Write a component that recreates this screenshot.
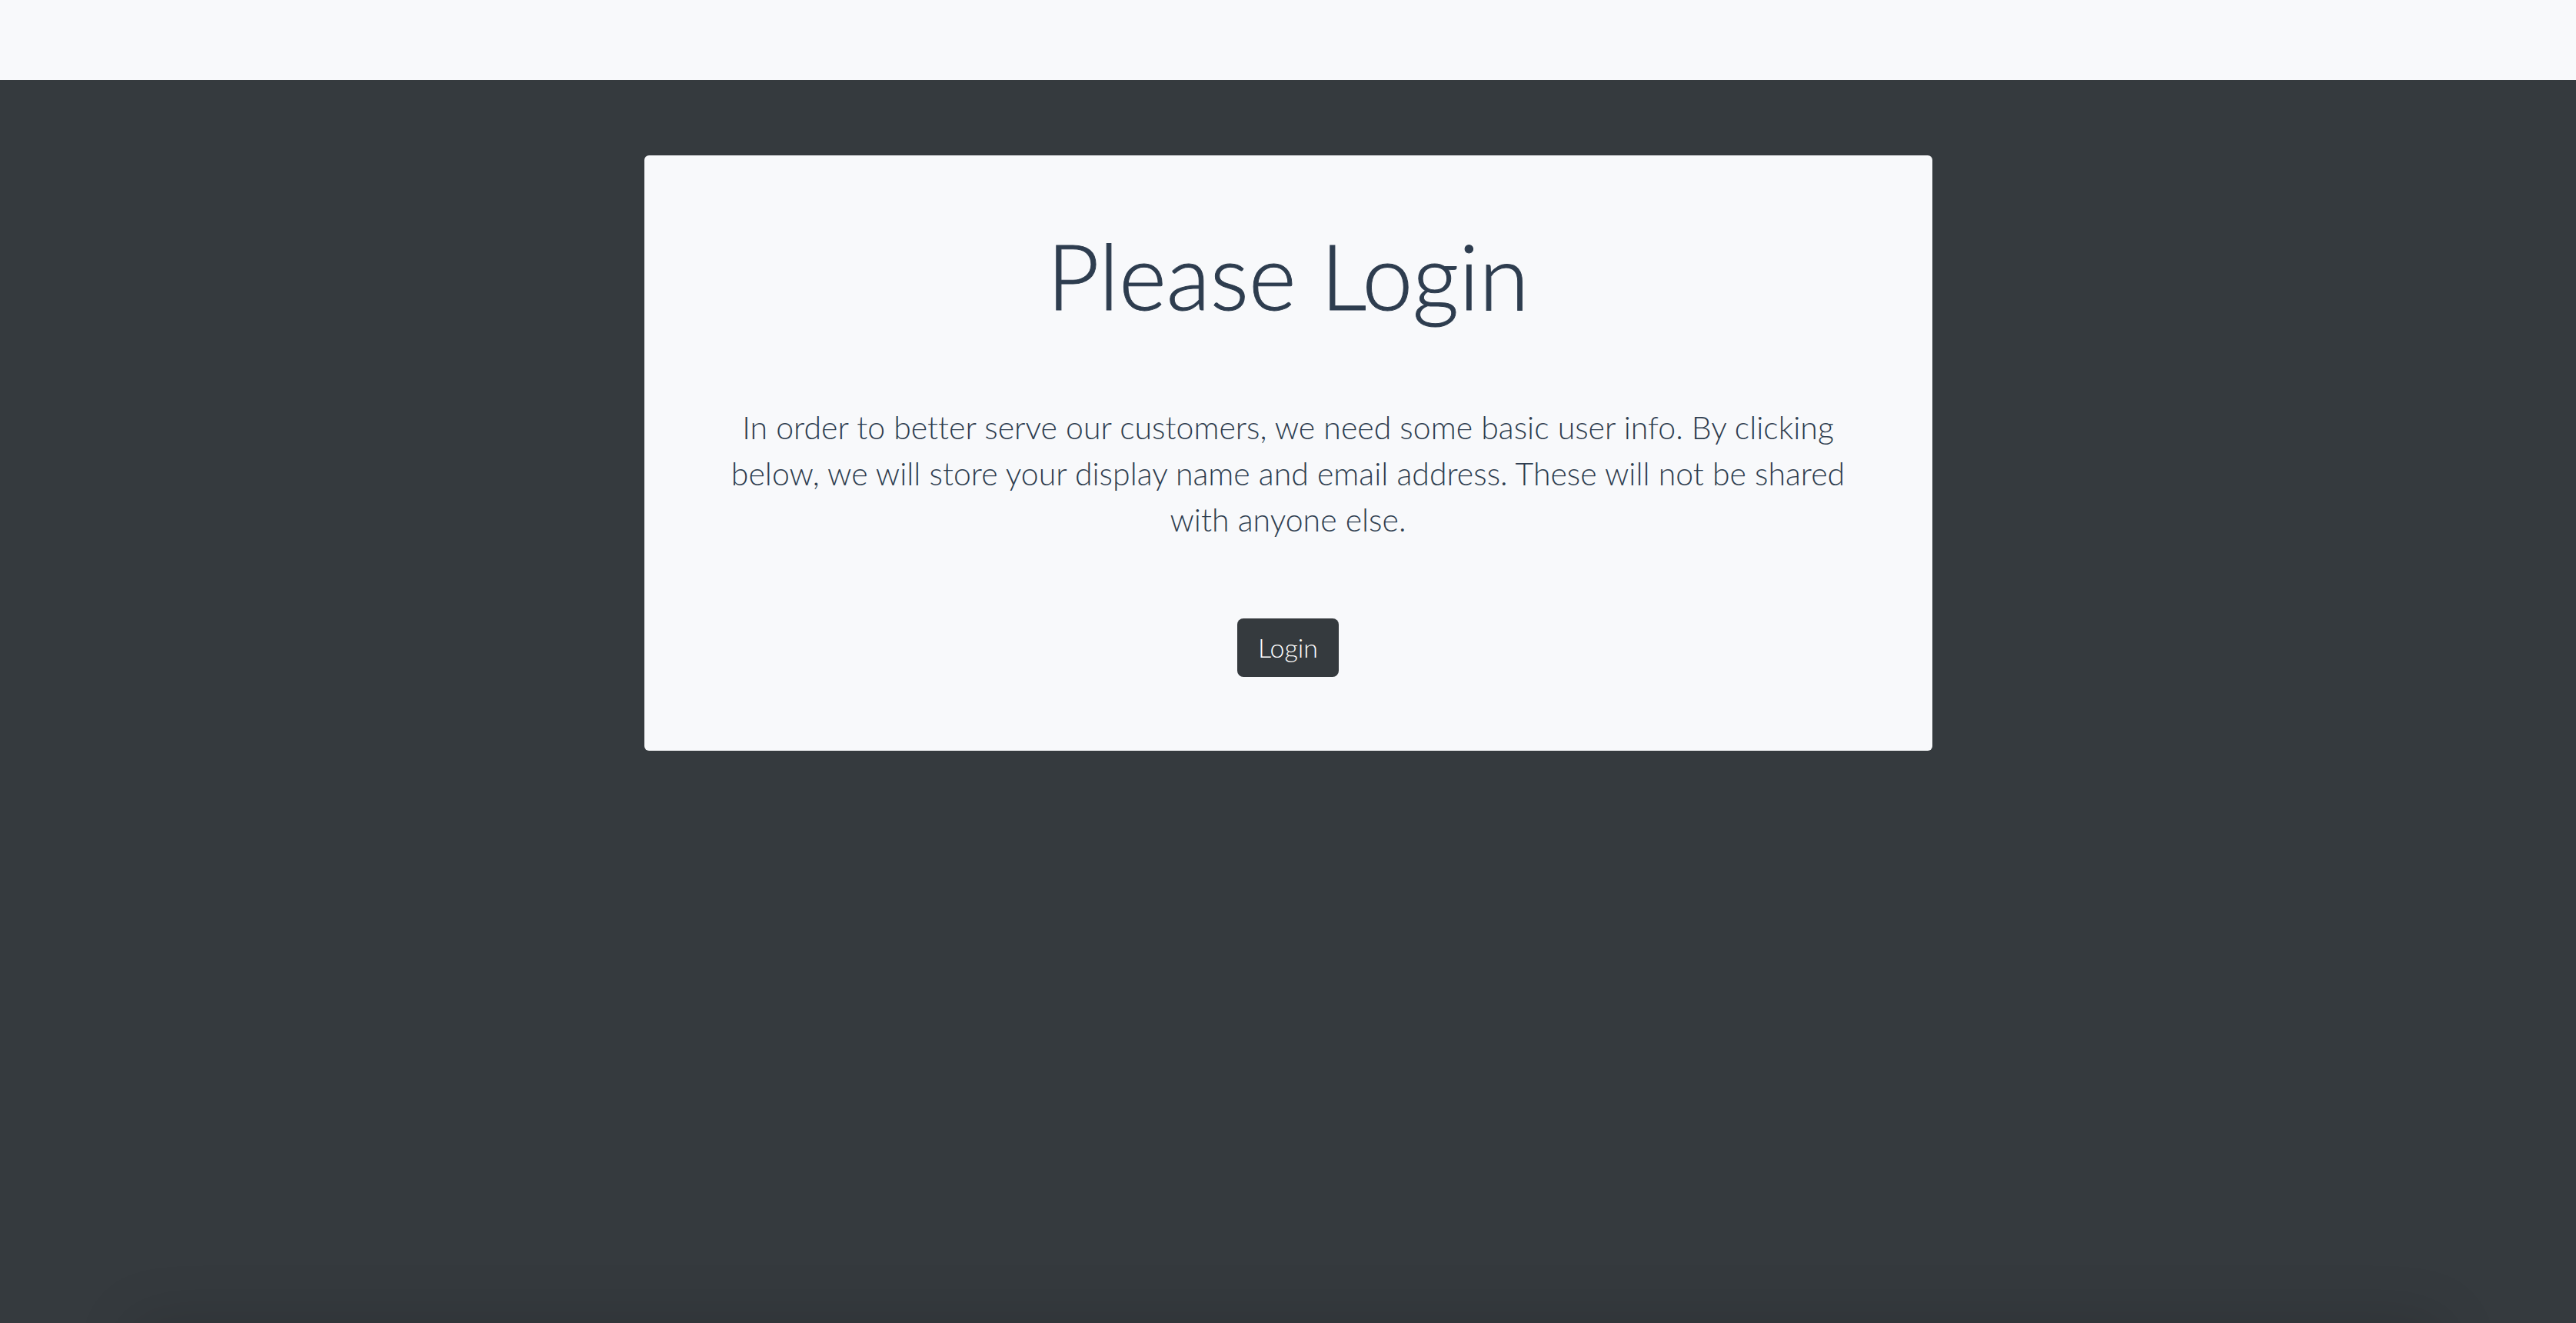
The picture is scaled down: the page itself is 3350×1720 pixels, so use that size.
<header class="topbar"></header>
<main>
  <section class="card">
    <h1>Please Login</h1>
    <p>
      In order to better serve our customers, we need some basic user info. By clicking below, we
      will store your display name and email address. These will not be shared with anyone else.
    </p>
    <button type="button">Login</button>
  </section>
</main>
<footer class="edge"></footer>

<style>
  :global(html) {
    height: 100%;
  }
  :global(body) {
    height: 100%;
    margin: 0;
    background: #353a3e;
    color: #2e3d4f;
    font-family: Avenir, Lato, sans-serif;
    font-weight: 300;
    font-variant-ligatures: none;
  }
  :global(#app) {
    display: flex;
    flex-direction: column;
    min-height: 100%;
    overflow: hidden;
  }
  .topbar {
    height: 104px;
    background: #f8f9fb;
  }
  main {
    flex: 1;
    padding: 98px 0;
  }
  .card {
    display: flex;
    flex-direction: column;
    align-items: center;
    box-sizing: border-box;
    width: 50%;
    margin: 0 auto;
    padding: 88px 96px 96px;
    border-radius: 6px;
    background: #f8f9fb;
    text-align: center;
  }
  h1 {
    margin: 0 0 100px;
    font-size: 118px;
    line-height: 136px;
    font-weight: 300;
    -webkit-text-stroke: 1px currentColor;
  }
  p {
    margin: 0 0 98px;
    font-size: 41px;
    line-height: 60px;
  }
  button {
    padding: 14px 27px;
    border: 0;
    border-radius: 8px;
    background: #353a3e;
    color: #fff;
    font: inherit;
    font-size: 34px;
    line-height: 48px;
  }
  .edge {
    height: 96px;
    margin: 0 176px -96px;
    box-shadow: 0 0 80px rgba(0, 0, 0, 0.15);
  }
</style>
